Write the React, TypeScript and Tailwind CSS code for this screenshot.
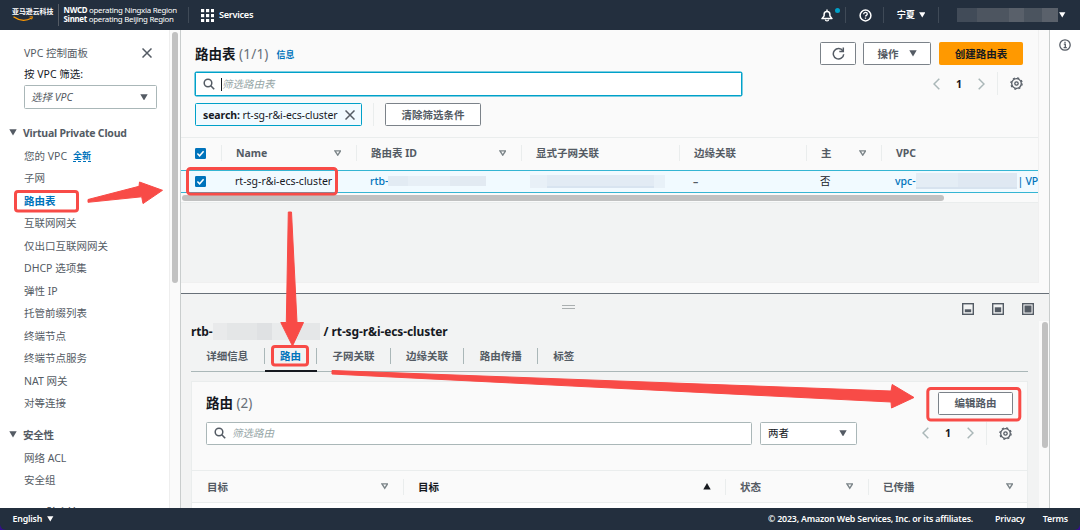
import type { ReactNode } from "react";
import clsx from "clsx";

const vpcLinks = [
  "子网",
  "路由表",
  "互联网网关",
  "仅出口互联网网关",
  "DHCP 选项集",
  "弹性 IP",
  "托管前缀列表",
  "终端节点",
  "终端节点服务",
  "NAT 网关",
  "对等连接",
];

const securityLinks = ["网络 ACL", "安全组"];

const tabs = ["详细信息", "路由", "子网关联", "边缘关联", "路由传播", "标签"];

const tableCols = "grid grid-cols-[40px_135px_165px_158px_127px_75px_158px]";
const routeCols = "grid grid-cols-[211px_322px_143px_160px]";

function Caret({ className = "h-[6.5px] w-[8px]" }: { className?: string }) {
  return (
    <svg viewBox="0 0 8 7" className={clsx("shrink-0 fill-current", className)}>
      <path d="M0 0.3h8L4 7z" />
    </svg>
  );
}

function SortIcon({ up = false }: { up?: boolean }) {
  if (up) {
    return (
      <svg viewBox="0 0 8 7" className="-mr-px h-[6.5px] w-[8px] shrink-0 fill-[#16191f]">
        <path d="M0 7h8L4 0z" />
      </svg>
    );
  }
  return (
    <svg viewBox="0 0 8 7" className="h-[6.5px] w-[7.5px] shrink-0 fill-none stroke-[#7b8488]">
      <path d="M1 1h6L4 5.6z" strokeWidth="1.4" />
    </svg>
  );
}

function SearchIcon() {
  return (
    <svg viewBox="0 0 12 12" className="size-[12px] shrink-0 fill-none stroke-[#545b64]">
      <circle cx="5" cy="5" r="3.8" strokeWidth="1.5" />
      <path d="M7.8 7.8l3.4 3.4" strokeWidth="1.6" />
    </svg>
  );
}

function CloseIcon() {
  return (
    <svg viewBox="0 0 10 10" className="size-[10px] shrink-0 fill-none stroke-[#545b64]">
      <path d="M0.5 0.5l9 9M9.5 0.5l-9 9" strokeWidth="1.5" />
    </svg>
  );
}

function GearIcon() {
  return (
    <svg viewBox="0 0 13 13" className="size-[13px] shrink-0 fill-none stroke-[#545b64]">
      <circle cx="6.5" cy="6.5" r="4.8" strokeWidth="1.3" />
      <circle cx="6.5" cy="6.5" r="5.7" strokeWidth="1.1" strokeDasharray="2.2 2.277" />
      <circle cx="6.5" cy="6.5" r="1.7" strokeWidth="1.3" />
    </svg>
  );
}

function Checkbox() {
  return (
    <svg viewBox="0 0 11 11" className="size-[11px] shrink-0">
      <rect width="11" height="11" rx="1.2" fill="#0073bb" />
      <path d="M2.4 5.5l2.2 2.3 4-4.6" fill="none" stroke="#fff" strokeWidth="1.5" />
    </svg>
  );
}

function Button({
  primary = false,
  className = "",
  children,
}: {
  primary?: boolean;
  className?: string;
  children: ReactNode;
}) {
  return (
    <button
      className={clsx(
        "flex h-[23px] items-center justify-center rounded-[1.5px] border font-bold",
        primary ? "border-[#ff9900] bg-[#ff9900] text-[#16191f]" : "border-[#7b8289] bg-white text-[#545b64]",
        className
      )}
    >
      {children}
    </button>
  );
}

function Pager() {
  return (
    <div className="flex h-[23px] items-center">
      <svg viewBox="0 0 7 12" className="h-[12px] w-[7px] fill-none stroke-[#aab7b8]">
        <path d="M6.3 0.7L1 6l5.3 5.3" strokeWidth="1.5" />
      </svg>
      <span className="w-[38px] text-center font-bold">1</span>
      <svg viewBox="0 0 7 12" className="h-[12px] w-[7px] fill-none stroke-[#aab7b8]">
        <path d="M0.7 0.7L6 6 0.7 11.3" strokeWidth="1.5" />
      </svg>
      <span className="mr-3 ml-[12px] h-full w-px bg-[#eaeded]" />
      <GearIcon />
    </div>
  );
}

function HeadCell({
  label,
  sort,
  first = false,
  dark = false,
}: {
  label: string;
  sort?: "up" | "down";
  first?: boolean;
  dark?: boolean;
}) {
  return (
    <div
      className={clsx(
        "flex h-4 items-center justify-between border-l pr-[15px] pl-[14px] font-bold whitespace-nowrap",
        first ? "border-transparent" : "border-[#eaeded]",
        dark ? "text-[#16191f]" : "text-[#545b64]"
      )}
    >
      {label}
      {sort && <SortIcon up={sort === "up"} />}
    </div>
  );
}

function TopBar() {
  return (
    <header className="flex h-[30px] shrink-0 items-center bg-[#232f3e] text-white">
      <div className="relative ml-[12px] flex h-full w-[46px] items-start pt-[5px]">
        <span className="text-[6.9px] leading-[13px] font-bold whitespace-nowrap">亚马逊云科技</span>
        <svg viewBox="0 0 22 6" className="absolute top-[16px] left-px h-[6px] w-[22px] fill-none stroke-[#ff9900]">
          <path d="M0.5 0.8c6 4.2 13 4.2 18.2 1.2" strokeWidth="1.4" />
          <path d="M16.5 0.9l3-.2-.8 2.7" strokeWidth="0.9" />
        </svg>
      </div>
      <span className="h-[22px] w-px bg-[#545b64]" />
      <div className="ml-[4.5px] w-[124.5px] text-[7.9px] leading-[9px] tracking-[-0.28px] whitespace-nowrap">
        <div>
          <b>NWCD</b> operating Ningxia Region
        </div>
        <div>
          <b>Sinnet</b> operating Beijing Region
        </div>
      </div>
      <span className="h-4 w-px bg-[#3f4a57]" />
      <svg viewBox="0 0 13 13" className="ml-[12px] size-[13px] fill-white">
        {[0, 5, 10].map((y) =>
          [0, 5, 10].map((x) => <rect key={`${x}-${y}`} x={x} y={y} width="3.2" height="3.2" />)
        )}
      </svg>
      <span className="ml-[5px] text-[9.2px] font-semibold tracking-[-0.3px]">Services</span>

      <div className="ml-auto flex h-full items-center">
        <div className="relative">
          <svg viewBox="0 0 12 13" className="h-[13px] w-[12px] fill-none stroke-white">
            <path
              d="M6 0.6v1.6M1 9.6h10L8.9 6.9V5.4C8.9 3.5 7.8 2.4 6 2.4S3.1 3.5 3.1 5.4v1.5z"
              strokeWidth="1.5"
              strokeLinejoin="round"
            />
            <path d="M4.4 10.4a1.6 1.5 0 0 0 3.2 0" strokeWidth="1.3" />
          </svg>
          <span className="absolute -top-[1px] left-[14px] size-[5px] rounded-full bg-[#00a1c9]" />
        </div>
        <span className="ml-[12px] h-4 w-px bg-[#3f4a57]" />
        <svg viewBox="0 0 13 13" className="ml-[13px] size-[13px] fill-none stroke-white">
          <circle cx="6.5" cy="6.5" r="5.4" strokeWidth="1.5" />
          <path d="M4.7 5.2c0-2.4 3.6-2.2 3.6-.1 0 1.3-1.8 1.2-1.8 2.5M6.5 8.5v1.3" strokeWidth="1.3" />
        </svg>
        <span className="ml-[11px] h-4 w-px bg-[#3f4a57]" />
        <span className="ml-[13px] text-[9.2px] font-bold">宁夏</span>
        <Caret className="ml-[3.5px] h-[5.5px] w-[6.5px]" />
        <span className="ml-[13px] h-4 w-px bg-[#3f4a57]" />
        <span className="ml-[18px] flex h-[14px] w-[101px]">
          <span className="w-[20px] bg-[#414b58]" />
          <span className="w-[32px] bg-[#4d5560]" />
          <span className="w-[15px] bg-[#59606a]" />
          <span className="w-[18px] bg-[#4b545f]" />
          <span className="w-[16px] bg-[#5a616b]" />
        </span>
        <Caret className="mr-[14.5px] ml-[1px] h-[5.5px] w-[6.5px]" />
      </div>
    </header>
  );
}

function SideGroup({ title, className = "" }: { title: string; className?: string }) {
  return (
    <div className={clsx("flex h-[22px] items-center gap-[6px] pl-[9px] font-bold tracking-[-0.22px]", className)}>
      <Caret />
      {title}
    </div>
  );
}

function Sidebar() {
  return (
    <aside className="flex w-[181px] shrink-0 border-r border-[#c9cdcd] bg-white text-[#545b64]">
      <nav className="w-[169px] overflow-hidden">
        <div className="mt-[13px] flex h-5 items-center justify-between pr-[17px] pl-[24px]">
          VPC 控制面板
          <CloseIcon />
        </div>
        <div className="pl-[24px] leading-[22px] text-[#16191f]">按 VPC 筛选:</div>
        <div className="ml-[24px] flex h-[24px] w-[133px] items-center justify-between rounded-[1.5px] border border-[#aab7b8] pr-2 pl-[6px]">
          <span className="italic">选择 VPC</span>
          <Caret />
        </div>
        <SideGroup title="Virtual Private Cloud" className="mt-[12.5px] mb-[1px]" />
        <ul className="pl-[24px] leading-[22.5px]">
          <li className="flex items-center">
            您的 VPC
            <span className="ml-[6px] border-b border-dashed border-[#0073bb] text-[9px] leading-[11px] font-bold text-[#0073bb]">
              全新
            </span>
          </li>
          {vpcLinks.map((link) => (
            <li key={link} className={clsx(link === "路由表" && "font-bold text-[#0073bb]")}>
              {link}
            </li>
          ))}
        </ul>
        <SideGroup title="安全性" className="mt-[9px] mb-[1px]" />
        <ul className="pl-[24px] leading-[22.5px]">
          {securityLinks.map((link) => (
            <li key={link}>{link}</li>
          ))}
        </ul>
        <SideGroup title="DNS 防火墙" className="mt-[9px]" />
      </nav>
      <div className="flex-1 border-l border-[#eeeeee] bg-[#fafafa] pt-[2px] pl-[2px]">
        <div className="h-[251px] w-[6px] rounded-full bg-[#c1c1c1]" />
      </div>
    </aside>
  );
}

function RouteTables() {
  return (
    <section className="flex h-[264px] shrink-0 border-b border-[#687078] bg-[#fafafa]">
      <div className="h-[253px] w-[858px] border-r border-b border-[#f0f0f0] bg-[#f2f3f3]">
        <div className="bg-[#fafafa]">
          <div className="flex pt-[12px] pr-[15px] pl-[14px]">
            <div className="flex h-[23px] items-center">
              <h1 className="text-[13.5px] font-bold">
                路由表 <span className="font-normal tracking-[0.2px] text-[#687078]">(1/1)</span>
              </h1>
              <a className="mt-[3px] ml-[8px] text-[9px] font-bold text-[#0073bb]">信息</a>
            </div>
            <div className="ml-auto flex gap-[7px]">
              <Button className="w-[36px]">
                <svg viewBox="0 0 13 13" className="size-[13px] fill-none stroke-current">
                  <path d="M10.9 4A5.2 5.2 0 1 0 11.7 7.2" strokeWidth="1.5" />
                  <path d="M11.3 0.5v4H7.3" strokeWidth="1.5" />
                </svg>
              </Button>
              <Button className="w-[68px] gap-[10px]">
                操作
                <Caret />
              </Button>
              <Button primary className="ml-px w-[84px]">
                创建路由表
              </Button>
            </div>
          </div>
          <div className="mt-[7px] flex justify-between pr-[15px] pl-[14px]">
            <div className="flex h-[24px] w-[546.5px] items-center rounded-[1.5px] border border-[#00a1c9] bg-white pl-[7px] text-[#95a5a6] italic shadow-[0_0_0_0.5px_#00a1c9]">
              <SearchIcon />
              <span className="ml-[6px] h-[13px] w-px bg-[#16191f]" />
              筛选路由表
            </div>
            <Pager />
          </div>
          <div className="flex h-[41px] items-start pt-[7px] pl-[14px]">
            <div className="flex h-[23px] w-[167px] items-center justify-between rounded-[1.5px] border border-[#00a1c9] bg-[#f1faff] pr-[6px] pl-[7px] whitespace-nowrap">
              <span className="tracking-[-0.1px]">
                <b>search:</b> rt-sg-r&amp;i-ecs-cluster
              </span>
              <CloseIcon />
            </div>
            <span className="mr-[11px] ml-[11px] h-[23px] w-px bg-[#eaeded]" />
            <Button className="w-[96px]">清除筛选条件</Button>
          </div>
          <div className={clsx(tableCols, "h-[33px] items-center overflow-hidden border-t border-[#eaeded] pb-[2px]")}>
            <span className="pl-[14px]">
              <Checkbox />
            </span>
            <HeadCell label="Name" sort="down" />
            <HeadCell label="路由表 ID" sort="down" />
            <HeadCell label="显式子网关联" />
            <HeadCell label="边缘关联" />
            <HeadCell label="主" sort="down" />
            <HeadCell label="VPC" />
          </div>
          <div
            className={clsx(
              tableCols,
              "h-[23px] items-center overflow-hidden border-y border-[#35b5d3] bg-[#f1faff] pb-px whitespace-nowrap"
            )}
          >
            <span className="pl-[14px]">
              <Checkbox />
            </span>
            <span className="pl-[14px]">rt-sg-r&amp;i-ecs-cluster</span>
            <span className="flex items-center pl-[14px] font-medium text-[#0073bb]">
              rtb-
              <span className="flex h-[10px] w-[98px]">
                <span className="w-[20px] bg-[#e2ebf3]" />
                <span className="w-[42px] bg-[#e7eff6]" />
                <span className="flex-1 bg-[#e2eaf2]" />
              </span>
            </span>
            <span className="flex h-[13px] pl-[9px]">
              <span className="w-[17px] bg-[#e8f0f7]" />
              <span className="w-[107px] border-b-2 border-[#d8e4f0] bg-[#e2ebf4]" />
              <span className="w-[11px] bg-[#e8f1f8]" />
            </span>
            <span className="pl-[14px] font-bold text-[#545b64]">–</span>
            <span className="pl-[14px]">否</span>
            <span className="flex items-center pl-[14px] font-medium text-[#0073bb]">
              vpc-
              <span className="flex h-[16px] w-[101px] shrink-0 border-b-2 border-[#d7e3ef]">
                <span className="w-[42px] bg-[#e4edf5]" />
                <span className="flex-1 bg-[#dfe8f2]" />
              </span>
              <span className="pl-px tracking-[-0.3px]">| VP</span>
            </span>
          </div>
          <div className="h-[10px] border-b border-[#eaeded] pt-[2px] pl-[1px]">
            <div className="h-[6px] w-[762px] rounded-full bg-[#c1c1c1]" />
          </div>
        </div>
      </div>
    </section>
  );
}

function PanelIcon({ children }: { children: ReactNode }) {
  return (
    <svg viewBox="0 0 12 12" className="size-[12px] fill-[#545b64]">
      <rect x="0.7" y="0.7" width="10.6" height="10.6" fill="none" stroke="#545b64" strokeWidth="1.4" />
      {children}
    </svg>
  );
}

function SplitPanel() {
  return (
    <section className="flex min-h-0 flex-1 flex-col bg-[#f2f3f3]">
      <div className="flex h-[26.5px] shrink-0 items-start pt-[9px]">
        <div className="mt-[2px] ml-[381px] h-[4px] w-[13px] border-y border-[#aaafb0]" />
        <div className="mr-[15.5px] ml-auto flex gap-[18px]">
          <PanelIcon>
            <rect x="2.8" y="6.3" width="6.4" height="2.9" />
          </PanelIcon>
          <PanelIcon>
            <rect x="2.8" y="4.3" width="6.4" height="4.9" />
          </PanelIcon>
          <PanelIcon>
            <rect x="2.5" y="2.5" width="7" height="7" />
          </PanelIcon>
        </div>
      </div>
      <div className="flex min-h-0 flex-1">
        <div className="w-[858px] overflow-hidden pr-[11px] pl-[10px]">
          <h2 className="flex h-[22px] items-center text-[12px] font-bold tracking-[-0.1px] whitespace-nowrap">
            rtb-
            <span className="mr-[4px] flex h-[17px] w-[107px]">
              <span className="w-[14px] bg-[#e9eaeb]" />
              <span className="w-[30px] bg-[#e4e6e7]" />
              <span className="w-[15px] bg-[#dfe1e3]" />
              <span className="w-[22px] bg-[#e9ebec]" />
              <span className="flex-1 bg-[#e5e7e8]" />
            </span>
            / rt-sg-r&amp;i-ecs-cluster
          </h2>
          <div className="flex h-[29px] border-b border-[#aab7b8] pt-[5px] font-bold text-[#545b64]">
            {tabs.map((tab) => (
              <div
                key={tab}
                className={clsx("flex h-[24px]", tab === "路由" && "border-b-2 border-[#16191f] text-[#0073bb]")}
              >
                <span className="px-[15.3px] leading-[16px]">{tab}</span>
                {tab !== "标签" && <span className="h-4 w-px bg-[#aab7b8]" />}
              </div>
            ))}
          </div>
          <div className="mt-[9px] h-[130px] border-x border-t border-[#eaeded] bg-[#fafafa]">
            <div className="flex items-center justify-between pt-[10px] pr-[14px] pl-[14px]">
              <h3 className="text-[13.5px] font-bold">
                路由 <span className="font-normal text-[#687078]">(2)</span>
              </h3>
              <Button className="w-[75px]">编辑路由</Button>
            </div>
            <div className="mt-[7px] flex pr-[15px] pl-[14px]">
              <div className="flex h-[23px] w-[546px] items-center rounded-[1.5px] border border-[#aab7b8] bg-white pl-[7px] text-[#95a5a6] italic">
                <SearchIcon />
                <span className="ml-[6px]">筛选路由</span>
              </div>
              <div className="ml-2 flex h-[23px] w-[97px] items-center justify-between rounded-[1.5px] border border-[#aab7b8] bg-white pr-[9px] pl-[7px]">
                两者
                <span className="text-[#545b64]">
                  <Caret />
                </span>
              </div>
              <div className="ml-auto">
                <Pager />
              </div>
            </div>
            <div className={clsx(routeCols, "mt-[25.5px] h-[33px] items-center border-y border-[#eaeded]")}>
              <HeadCell label="目标" sort="down" first />
              <HeadCell label="目标" sort="up" dark />
              <HeadCell label="状态" sort="down" />
              <HeadCell label="已传播" sort="down" />
            </div>
            <div className="h-[5px] bg-white" />
          </div>
        </div>
        <div className="flex-1 bg-[#fafafa] pt-[1px] pl-[3px]">
          <div className="h-[126px] w-[6px] rounded-full bg-[#c1c1c1]" />
        </div>
      </div>
    </section>
  );
}

function Footer() {
  return (
    <footer className="flex h-[22px] shrink-0 items-center rounded-b-[6px] bg-[#232f3e] pr-[12px] pl-[12.5px] text-[8.8px] font-semibold tracking-[-0.18px] text-white">
      English
      <Caret className="ml-[5px] h-[5.5px] w-[6.5px]" />
      <span className="ml-auto">© 2023, Amazon Web Services, Inc. or its affiliates.</span>
      <span className="ml-[22px]">Privacy</span>
      <span className="ml-[18px]">Terms</span>
    </footer>
  );
}

// Red boxes and arrows that walk through the steps
function Annotations() {
  return (
    <svg viewBox="0 0 1080 530" className="pointer-events-none absolute inset-0 h-[530px] w-[1080px]">
      <g fill="none" stroke="#f84b47" strokeWidth="3">
        <rect x="15.5" y="191.5" width="62" height="19.5" rx="2.5" />
        <rect x="187.5" y="168.5" width="149" height="25.5" rx="3" />
        <rect x="272.5" y="346.5" width="35" height="18.5" rx="2.5" />
        <rect x="927.8" y="388.5" width="92" height="31.5" rx="3" />
      </g>
      <g fill="#f84b47" stroke="#f84b47" strokeWidth="1" strokeLinejoin="round">
        <path d="M88 199.5L139 186.3 139.5 182 162.5 190.3 143 203.6 141.7 196.8 88 202.3z" />
        <path d="M288.3 212h3.2l5.5 110.5h6.5l-11 23.5-11.7-23.5h5.500z" />
        <path d="M332 370.5L891 391 892.2 384.5 914 397.5 891.500 408 891 402 332 374z" />
      </g>
    </svg>
  );
}

export default function App() {
  return (
    <div className="relative flex h-[530px] w-[1080px] flex-col overflow-hidden bg-[#32108c] font-['Noto_Sans','Noto_Sans_CJK_SC',sans-serif] text-[10.5px] leading-[16px] text-[#16191f]">
      <TopBar />
      <div className="flex min-h-0 flex-1">
        <Sidebar />
        <main className="flex w-[869px] flex-col border-r border-[#c9cdcd]">
          <RouteTables />
          <SplitPanel />
        </main>
        <aside className="flex flex-1 justify-center bg-white pt-[9px]">
          <svg viewBox="0 0 12 12" className="size-[12px] fill-none stroke-[#545b64]">
            <circle cx="6" cy="6" r="5.2" strokeWidth="1.3" />
            <path d="M4.8 5.2H6.3v3.3M4.6 8.7h3.2M6 2.7v1.4" strokeWidth="1.3" />
          </svg>
        </aside>
      </div>
      <Footer />
      <Annotations />
    </div>
  );
}
